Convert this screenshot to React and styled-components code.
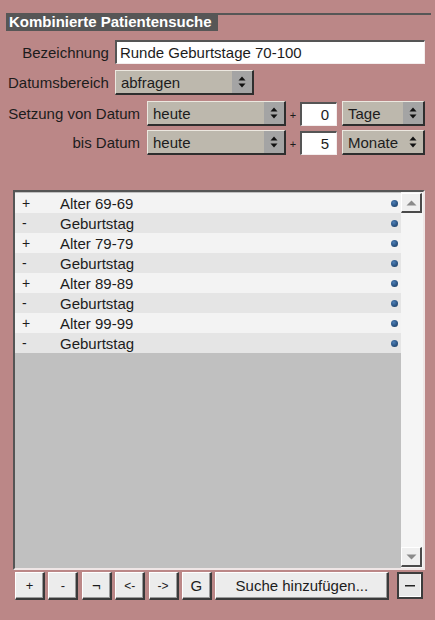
import React from "react";
import styled, { createGlobalStyle } from "styled-components";

const GlobalStyle = createGlobalStyle`
  html, body { margin: 0; padding: 0; background: #bb8787; }
  body {
    font-family: "Liberation Sans", Arial, Helvetica, sans-serif;
    font-size: 15px;
    color: #1c1c1c;
  }
  * { box-sizing: border-box; }
`;

const Page = styled.div`
  width: 435px;
  height: 620px;
  padding: 13px 4px 0 6px;
  display: flex;
  flex-direction: column;
  background: #bb8787;
`;

const Header = styled.div`
  display: flex;
  align-items: flex-start;
  height: 18px;
`;

const Title = styled.div`
  background: #565656;
  color: #fff;
  font-weight: bold;
  font-size: 15px;
  line-height: 18px;
  height: 18px;
  padding: 0 6px 0 3px;
  white-space: nowrap;
`;

const Rule = styled.div`
  flex: 1;
  height: 2px;
  background: #565656;
`;

const TopForm = styled.div`
  display: grid;
  grid-template-columns: auto 1fr;
  column-gap: 6px;
  row-gap: 6px;
  align-items: center;
  margin: 9px 6px 0 2px;
`;

const BottomForm = styled.div`
  display: grid;
  grid-template-columns: auto 139px 14px 37px 88px;
  row-gap: 4px;
  align-items: center;
  margin: 6px 6px 0 2px;
`;

const Label = styled.div`
  text-align: right;
  white-space: nowrap;
  padding-right: ${(p) => p.$pad || 0}px;
`;

const TextField = styled.div`
  height: 24px;
  background: #fff;
  border-style: solid;
  border-width: 2px 1px 1px 2px;
  border-color: #555 #f4eeee #f4eeee #555;
  display: flex;
  align-items: center;
  justify-content: ${(p) => (p.$right ? "flex-end" : "flex-start")};
  padding: 0 ${(p) => (p.$right ? 7 : 3)}px 0 3px;
  white-space: nowrap;
  overflow: hidden;
`;

const SelectBox = styled.div`
  width: ${(p) => p.$w}px;
  height: 25px;
  display: flex;
  border-style: solid;
  border-width: 1px 2px 2px 1px;
  border-color: #ece8e0 #2e2e2e #2e2e2e #ece8e0;
  background: #bdb8ad;
  margin-left: ${(p) => p.$ml || 0}px;
`;

const SelectText = styled.div`
  flex: 1;
  display: flex;
  align-items: center;
  padding-left: 5px;
  white-space: nowrap;
  overflow: hidden;
`;

const SelectArrow = styled.div`
  width: 20px;
  background: ${(p) => (p.$plain ? "transparent" : "#a4a4a4")};
  display: flex;
  align-items: center;
  justify-content: center;
`;

const Plus = styled.div`
  font-size: 11px;
  text-align: center;
  padding-top: 2px;
`;

const ListBox = styled.div`
  margin: 35px 6px 0 7px;
  height: 380px;
  display: flex;
  border-style: solid;
  border-width: 2px 2px 2px 2px;
  border-color: #555 #efe6e6 #efe6e6 #555;
`;

const Rows = styled.div`
  flex: 1;
  background: #c0c0c0;
  display: flex;
  flex-direction: column;
  padding-top: 1px;
`;

const Row = styled.div`
  height: 20px;
  display: flex;
  align-items: center;
  background: ${(p) => (p.$alt ? "#e5e5e5" : "#f3f3f3")};
  padding: 0 3px 0 7px;
  white-space: nowrap;
`;

const Sign = styled.div`
  width: 38px;
  font-size: 14px;
`;

const RowLabel = styled.div`
  flex: 1;
  font-size: 15px;
`;

const Dot = styled.div`
  width: 7px;
  height: 7px;
  border-radius: 50%;
  background: radial-gradient(circle at 40% 35%, #4f7fb4 0%, #2b5585 55%, #1b3555 100%);
`;

const Scrollbar = styled.div`
  width: 22px;
  background: #f5f5f5;
  display: flex;
  flex-direction: column;
  justify-content: space-between;
  padding: 1px 0 1px 0;
`;

const ScrollButton = styled.div`
  width: 21px;
  height: 20px;
  background: #efefef;
  border-style: solid;
  border-width: 1px 2px 2px 1px;
  border-color: #fff #4a4a4a #4a4a4a #fff;
  display: flex;
  align-items: center;
  justify-content: center;
`;

const ButtonBar = styled.div`
  display: flex;
  align-items: flex-start;
  gap: 3.4px;
  margin: 2px 8px 0 9px;
`;

const Button = styled.div`
  width: ${(p) => p.$w || 30}px;
  height: 28px;
  background: #ececec;
  border-style: solid;
  border-width: 1px 2px 2px 1px;
  border-color: #fff #3a3a3a #3a3a3a #fff;
  box-shadow: inset -1px -1px 0 #9a9a9a;
  display: flex;
  align-items: center;
  justify-content: center;
  font-size: ${(p) => p.$fs || 13}px;
  white-space: nowrap;
`;

const MinusButton = styled.div`
  margin-left: auto;
  width: 26px;
  height: 27px;
  background: #e8e8e8;
  border: 2px solid #3c3c3c;
  box-shadow: inset -1px -1px 0 #fff;
  display: flex;
  align-items: center;
  justify-content: center;
`;

const UpDown = () => (
  <svg width="8" height="12" viewBox="0 0 8 12">
    <polygon points="4,0.5 7.5,4.5 0.5,4.5" fill="#111" />
    <polygon points="0.5,7.5 7.5,7.5 4,11.5" fill="#111" />
  </svg>
);

const Tri = ({ down }) => (
  <svg width="11" height="6" viewBox="0 0 11 6">
    {down ? (
      <polygon points="0.5,0.5 10.5,0.5 5.5,5.5" fill="#8a8a8a" />
    ) : (
      <polygon points="5.5,0.5 10.5,5.5 0.5,5.5" fill="#8a8a8a" />
    )}
  </svg>
);

const Select = ({ w, ml, children, plain }) => (
  <SelectBox $w={w} $ml={ml}>
    <SelectText>{children}</SelectText>
    <SelectArrow $plain={plain}>
      <UpDown />
    </SelectArrow>
  </SelectBox>
);

const items = [
  ["+", "Alter 69-69"],
  ["-", "Geburtstag"],
  ["+", "Alter 79-79"],
  ["-", "Geburtstag"],
  ["+", "Alter 89-89"],
  ["-", "Geburtstag"],
  ["+", "Alter 99-99"],
  ["-", "Geburtstag"],
];

export default function App() {
  return (
    <Page>
      <GlobalStyle />
      <Header>
        <Title>Kombinierte Patientensuche</Title>
        <Rule />
      </Header>

      <TopForm>
        <Label>Bezeichnung</Label>
        <TextField>Runde Geburtstage 70-100</TextField>
        <Label>Datumsbereich</Label>
        <Select w={139}>abfragen</Select>
      </TopForm>

      <BottomForm>
        <Label $pad={7}>Setzung von Datum</Label>
        <Select w={139}>heute</Select>
        <Plus>+</Plus>
        <TextField $right>0</TextField>
        <Select w={83} ml={5}>Tage</Select>

        <Label $pad={7}>bis Datum</Label>
        <Select w={139}>heute</Select>
        <Plus>+</Plus>
        <TextField $right>5</TextField>
        <Select w={83} ml={5} plain>Monate</Select>
      </BottomForm>

      <ListBox>
        <Rows>
          {items.map(([s, l], i) => (
            <Row key={i} $alt={i % 2 === 1}>
              <Sign>{s}</Sign>
              <RowLabel>{l}</RowLabel>
              <Dot />
            </Row>
          ))}
        </Rows>
        <Scrollbar>
          <ScrollButton>
            <Tri />
          </ScrollButton>
          <ScrollButton>
            <Tri down />
          </ScrollButton>
        </Scrollbar>
      </ListBox>

      <ButtonBar>
        <Button>+</Button>
        <Button>-</Button>
        <Button $fs={15}>¬</Button>
        <Button $fs={12}>&lt;-</Button>
        <Button $fs={12}>-&gt;</Button>
        <Button $fs={15}>G</Button>
        <Button $w={174} $fs={15}>Suche hinzufügen...</Button>
        <MinusButton>
          <svg width="10" height="2" viewBox="0 0 10 2">
            <rect x="0" y="0" width="10" height="1.5" fill="#222" />
          </svg>
        </MinusButton>
      </ButtonBar>
    </Page>
  );
}
